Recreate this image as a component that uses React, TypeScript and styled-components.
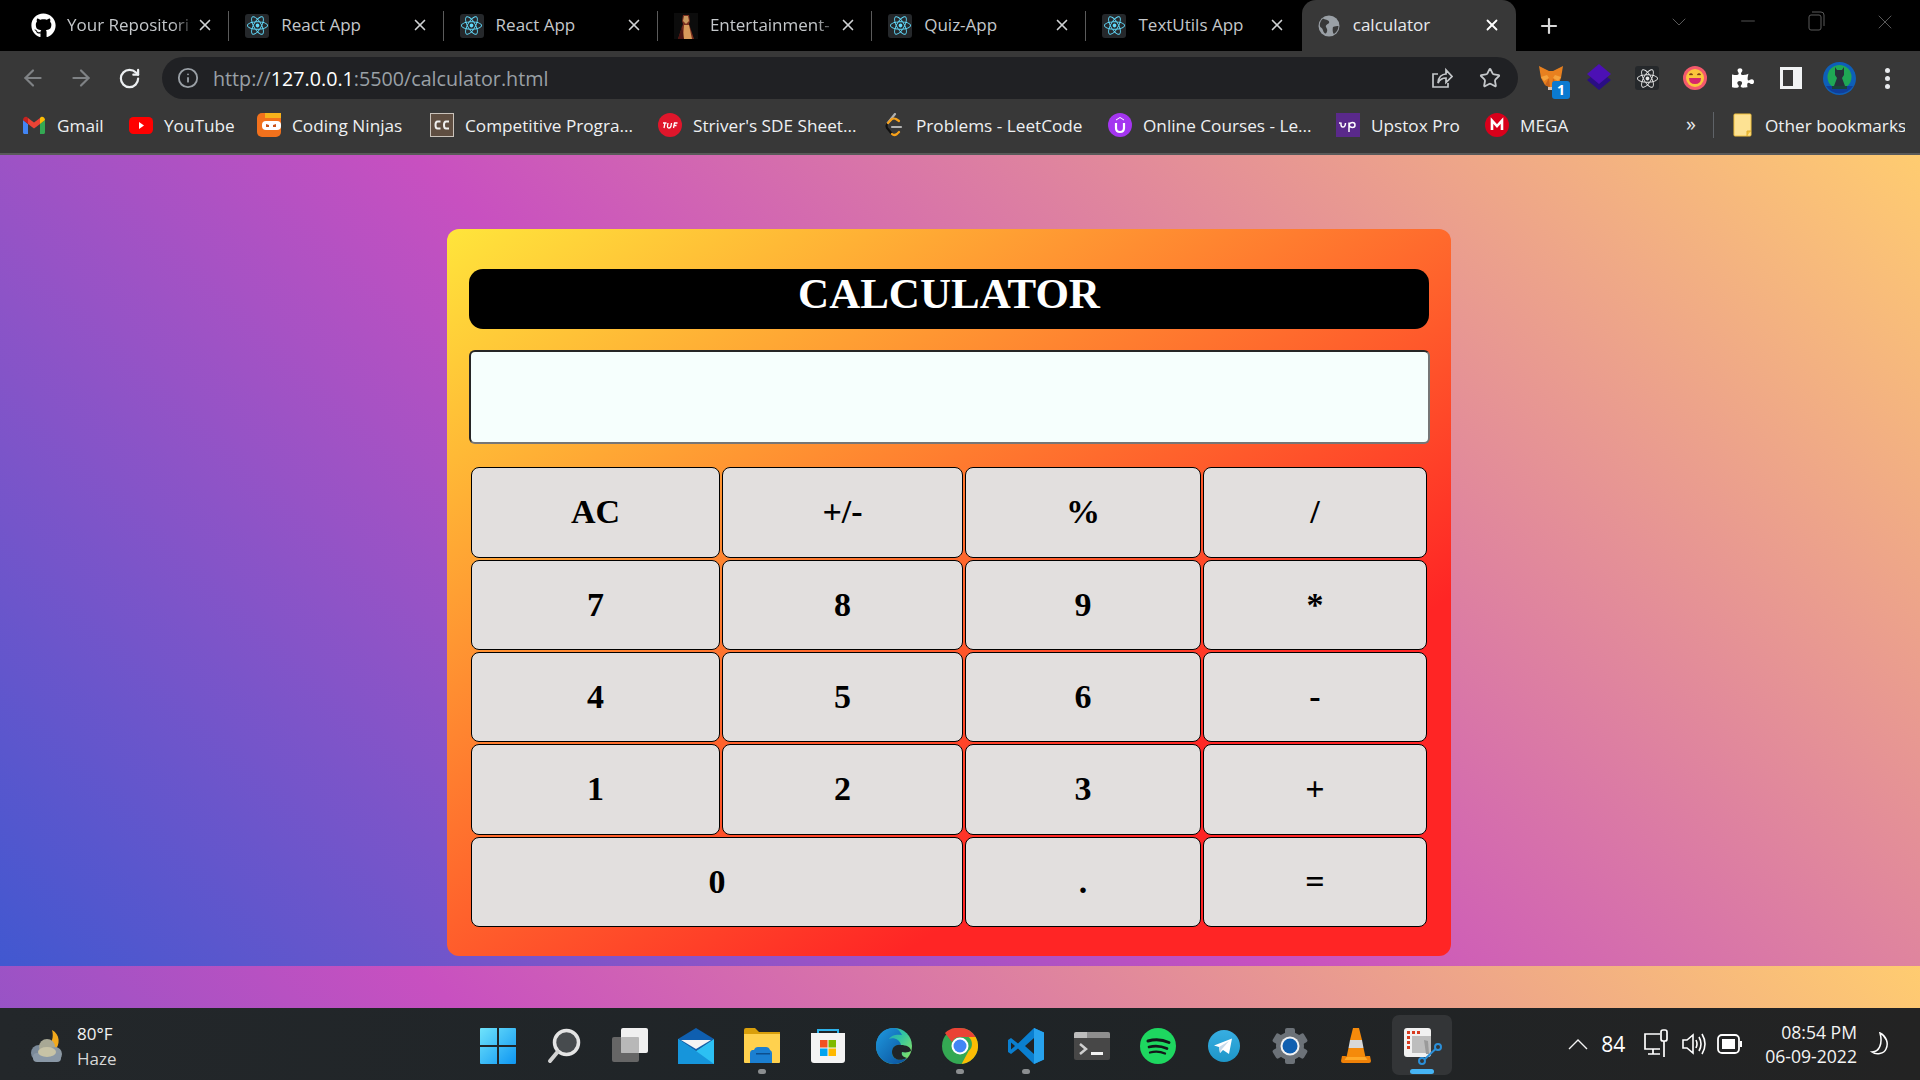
import React from "react";
import styled, { createGlobalStyle } from "styled-components";
import { ArrowLeft, ArrowRight, RotateCw, Info, Star, X, Plus, ChevronDown, Minus } from "lucide-react";
import { FaGithub, FaReact, FaPuzzlePiece } from "react-icons/fa";

const Global = createGlobalStyle`
  html, body { margin: 0; padding: 0; width: 1920px; height: 1080px; overflow: hidden; background: #000; }
  #root { width: 1920px; height: 1080px; }
  * { box-sizing: border-box; }
`;

const UI = `"Open Sans", "Noto Sans", sans-serif`;
const SERIF = `"Liberation Serif", "Times New Roman", serif`;

const Screen = styled.div`
  display: flex; flex-direction: column; width: 1920px; height: 1080px; font-family: ${UI};
`;

/* ---------- browser chrome ---------- */
const TabStrip = styled.div`
  display: flex; height: 51px; background: #000; padding-left: 15px; flex: none; align-items: stretch;
`;
const Tab = styled.div<{ $active?: boolean }>`
  width: ${p => (p.$active ? "214px" : "214.3px")};
  flex: none; display: flex; align-items: center; padding: 0 15px 0 ${p => (p.$active ? "14px" : "15px")}; position: relative;
  margin-left: ${p => (p.$active ? "1px" : "0")};
  background: ${p => (p.$active ? "#383838" : "transparent")};
  border-radius: ${p => (p.$active ? "14px 14px 0 0" : "0")};
  color: ${p => (p.$active ? "#e8eaed" : "#c4c7ca")};
`;
const TabSep = styled.span`
  position: absolute; right: 0; top: 11px; height: 30px; width: 1px; background: #5b5b5b;
`;
const TabFav = styled.span`
  width: 26px; height: 26px; flex: none; display: flex; align-items: center; justify-content: center; margin-right: 11px;
`;
const TabTitle = styled.span<{ $fade?: boolean }>`
  flex: 1; min-width: 0; white-space: nowrap; overflow: hidden; font-size: 17px; line-height: 22px; margin-top: -1px;
  ${p => p.$fade ? "mask-image: linear-gradient(90deg, #000 82%, transparent 100%);" : ""}
`;
const TabClose = styled.span`
  flex: none; width: 18px; height: 18px; display: flex; align-items: center; justify-content: center; color: #d0d2d4; margin-top: -1px;
`;
const NewTab = styled.span`
  width: 30px; margin-left: 18px; display: flex; align-items: center; justify-content: center; color: #d8d8d8;
`;
const WinButtons = styled.div`
  margin-left: auto; display: flex; align-items: flex-start; color: #5a5a5a; padding-right: 23px; padding-top: 10px; gap: 46px;
`;
const ReactBox = styled.span<{ $color?: string }>`
  width: 24px; height: 24px; background: #25282b; border-radius: 3px; display: flex; align-items: center; justify-content: center;
  color: ${p => p.$color || "#61dafb"};
`;

const Toolbar = styled.div`
  height: 54px; background: #383838; display: flex; align-items: center; flex: none; padding-left: 12px;
`;
const NavBtn = styled.span<{ $dim?: boolean }>`
  width: 42px; height: 42px; margin-right: 6px; display: flex; align-items: center; justify-content: center;
  color: ${p => (p.$dim ? "#7f8285" : "#eceff1")};
`;
const AddressBar = styled.div`
  width: 1356px; height: 42px; margin-left: 6px; background: #202124; border-radius: 21px; display: flex; align-items: center; padding: 0 4px 0 15px; flex: none; color: #9aa0a6;
`;
const Url = styled.div`
  margin-left: 14px; font-size: 19.7px; color: #9aa0a6; white-space: nowrap; flex: 1;
  b { font-weight: 400; color: #fff; }
`;
const PillIcon = styled.span`
  width: 48px; display: flex; justify-content: center; color: #c4c7ca; flex: none;
`;
const ExtRow = styled.div`
  display: flex; margin-left: 9px; align-items: center;
`;
const Ext = styled.span`
  width: 48px; height: 42px; display: flex; align-items: center; justify-content: center; position: relative; flex: none; color: #fff;
`;
const Badge = styled.span`
  position: absolute; left: 25px; top: 24px; width: 18px; height: 18px; border-radius: 3px; background: #0b7ad1; color: #fff;
  font-size: 14px; font-weight: 700; line-height: 18px; text-align: center;
`;
const Dots = styled.span`
  display: flex; flex-direction: column; gap: 3px;
  i { width: 5px; height: 5px; border-radius: 50%; background: #e8eaed; display: block; }
`;

const Bookmarks = styled.div`
  height: 48px; background: #383838; display: flex; align-items: center; flex: none; padding: 0 15px 8px 22px; color: #eef0f2; font-size: 17.2px;
`;
const BookmarkItem = styled.span<{ $w: number }>`
  width: ${p => p.$w}px; flex: none; display: flex; align-items: center; white-space: nowrap; overflow: hidden;
`;
const BookmarkIcon = styled.span`
  width: 24px; height: 24px; flex: none; display: flex; align-items: center; justify-content: center; margin-right: 11px;
`;
const More = styled.span`
  margin-left: auto; font-size: 20px; color: #e8eaed; line-height: 1; margin-top: -3px;
`;
const BmSep = styled.span`
  width: 1px; height: 26px; background: #5f6368; margin: 0 16px 0 17px;
`;
const Divider = styled.div`
  height: 2px; background: #5a5a5a; flex: none;
`;

/* ---------- page ---------- */
const Page = styled.main`
  flex: 1; min-height: 0; overflow: hidden; padding: 74px 0 0 447px;
  background-image: linear-gradient(43deg, #4158d0 0%, #c850c0 46%, #ffcc70 100%);
  background-size: 100% 811px;
  background-repeat: repeat;
`;
const Card = styled.section`
  width: 1004px; height: 727px; padding: 40px 22px 27px; border-radius: 12px;
  background-image: linear-gradient(147deg, #ffe53b 0%, #ff2525 74%);
`;
const Title = styled.h1`
  margin: 0 0 21px; height: 60px; background: #000; border-radius: 14px; color: #fff; text-align: center;
  font: 700 43px/50px ${SERIF};
`;
const Display = styled.input`
  display: block; width: 961px; height: 94px; margin: 0 0 21px; padding: 0 8px; background: #f6fffd;
  border: 2px solid; border-color: #262626 #767676 #767676 #262626; border-radius: 6px; outline: none;
`;
const Keys = styled.div`
  display: grid; grid-template-columns: 249px 241px 236px 224px; grid-template-rows: 91px 90px 90px 91px 90px; gap: 2px; padding: 2px;
`;
const Key = styled.button<{ $span?: number }>`
  grid-column: span ${p => p.$span || 1};
  background: #e2dfde; color: #000; border: 1px solid #000; border-radius: 8px; padding: 0 0 1px; margin: 0;
  font: 700 34px/1 ${SERIF};
`;

/* ---------- taskbar ---------- */
const Taskbar = styled.footer`
  height: 72px; flex: none; display: flex; align-items: center; padding-left: 30px;
  background: linear-gradient(90deg, #23272a 0%, #1f2427 50%, #232323 100%);
  color: #fff;
`;
const Weather = styled.div`
  display: flex; align-items: center; width: 435px; flex: none; padding-top: 4px;
`;
const WeatherText = styled.div`
  margin-left: 11px; font-size: 17px; line-height: 25px; color: #f2f2f2;
  span { display: block; }
  span + span { color: #d6d6d6; }
`;
const TaskIcons = styled.div`
  display: flex; flex: none;
`;
const TaskSlot = styled.span<{ $active?: boolean }>`
  width: 66px; height: 72px; padding-top: 3px; display: flex; align-items: center; justify-content: center; position: relative; flex: none;
  ${p => p.$active ? `&::before { content: ""; position: absolute; left: 3px; top: 7px; width: 60px; height: 60px; border-radius: 7px; background: #333537; }` : ""}
  svg { position: relative; }
`;
const RunDot = styled.i<{ $active?: boolean }>`
  position: absolute; left: 50%; bottom: 6px; transform: translateX(-50%); height: 5px; border-radius: 3px;
  width: ${p => (p.$active ? "24px" : "8px")}; background: ${p => (p.$active ? "#46b4f4" : "#8b8e90")};
`;
const Tray = styled.div`
  display: flex; align-items: center; margin-left: auto; padding-right: 29px; color: #fff;
`;
const TrayNum = styled.span`
  font-size: 21px; margin: 0 18px 0 13px;
`;
const TrayIcon = styled.span`
  display: flex; margin-right: 10px;
`;
const Clock = styled.div`
  text-align: right; font-size: 17.6px; line-height: 24px; margin: 0 12px 0 12px; color: #f4f4f4; white-space: nowrap;
  span { display: block; }
`;

/* ---------- drawings ---------- */
const ReactFav = ({ color }: { color?: string }) => (
  <ReactBox $color={color}><FaReact size={21} /></ReactBox>
);
const Portrait = () => (
  <svg width="24" height="26" viewBox="0 0 24 26">
    <rect width="24" height="26" fill="#0c0c0c" />
    <path d="M9 2h6l1 6-1 3 5 15H4L9 11 8 8z" fill="#7a2f1f" />
    <path d="M10 3h4l1 5-3 3-3-3z" fill="#c9985f" />
    <path d="M10 12h5l3 14h-9z" fill="#d79a5b" />
    <path d="M4 26l4-13 2 13z" fill="#4a1512" />
  </svg>
);
const Globe = () => (
  <svg width="22" height="22" viewBox="0 0 22 22">
    <circle cx="11" cy="11" r="10.500" fill="#9aa0a6" />
    <path d="M5 3.500c2 1.500 5 1 6 3s-2 2.500-3 4 2 3 1 6-2 2-3 1-1-4-3-5-1.500-6 2-9zM15 12c2-1 4-1 5.500-1 0 3.500-2 6.500-4.500 8-1.500-1-1.500-5-1-7z" fill="#383838" />
  </svg>
);
const Gmail = () => (
  <svg width="22" height="18" viewBox="0 0 22 18">
    <path d="M0 4v12.500C0 17.300.7 18 1.500 18H5V8z" fill="#4285f4" />
    <path d="M22 4v12.500c0 .8-.7 1.500-1.500 1.500H17V8z" fill="#34a853" />
    <path d="M5 8l6 4.500L17 8V2l-6 4.500L5 2z" fill="#ea4335" />
    <path d="M0 4c0-3 3.400-4.600 5-2v6L0 4z" fill="#c5221f" />
    <path d="M22 4c0-3-3.400-4.600-5-2v6l5-4z" fill="#fbbc04" />
  </svg>
);
const YouTube = () => (
  <svg width="24" height="17" viewBox="0 0 24 17">
    <rect width="24" height="17" rx="4.500" fill="#f00" />
    <path d="M10 5l5 3.500-5 3.500z" fill="#fff" />
  </svg>
);
const Ninjas = () => (
  <svg width="24" height="24" viewBox="0 0 24 24">
    <rect width="24" height="24" rx="5" fill="#f2711c" />
    <path d="M8 0h16v5H8z" fill="#f6b21b" />
    <rect x="5" y="8" width="19" height="9" rx="4" fill="#fff" />
    <path d="M9 11l3 1v2H9zM19 11l-3 1v2h3z" fill="#c9521a" />
  </svg>
);
const CC = () => (
  <svg width="24" height="24" viewBox="0 0 24 24">
    <rect width="24" height="24" fill="#c9c2ba" />
    <rect x="1" y="1" width="22" height="22" fill="#5f4e41" />
    <path d="M10.500 8.500H7.500q-2 0-2 3.500t2 3.500h3M19 8.500h-3q-2 0-2 3.500t2 3.500h3" fill="none" stroke="#f0f0f0" strokeWidth="2" />
  </svg>
);
const Tuf = () => (
  <svg width="24" height="24" viewBox="0 0 24 24">
    <circle cx="12" cy="12" r="12" fill="#e0162b" />
    <path d="M5 10h3.500M7 10l-1 5M10 10l-.6 3.500q0 1.500 1.500 1.500t2-1.500l.6-3.500M15.500 15l1-5h3M16 12.500h2.500" fill="none" stroke="#fff" strokeWidth="1.300" />
  </svg>
);
const LeetCode = () => (
  <svg width="24" height="24" viewBox="0 0 24 24" fill="none" strokeLinecap="round" strokeWidth="2.200">
    <path d="M14 1L6 11" stroke="#b0b0b0" />
    <path d="M6 11q-1 2 0 4l5 6" stroke="#111" />
    <path d="M11 21q2 2 5 0l2-2" stroke="#f7a11a" />
    <path d="M7 10l4-4q2-1 4 0l3 2" stroke="#f7a11a" />
    <path d="M11 14h9" stroke="#b3b3b3" />
  </svg>
);
const Udemy = () => (
  <svg width="24" height="24" viewBox="0 0 24 24">
    <circle cx="12" cy="12" r="12" fill="#a435f0" />
    <path d="M8 10v5q0 4 4 4t4-4v-5" fill="none" stroke="#fff" strokeWidth="2.200" />
    <path d="M12 4l4 2.500v1L12 5l-4 2.500v-1z" fill="#fff" />
  </svg>
);
const Upstox = () => (
  <svg width="24" height="24" viewBox="0 0 24 24">
    <rect width="24" height="24" fill="#5a298b" />
    <path d="M3 10l2 .1q-.3 4 2 4t2.500-4.100M13 9.500V19M13 12q1-2.500 3.500-2.500t2.500 2.500-2.500 2.500T13 12" fill="none" stroke="#fff" strokeWidth="1.500" />
  </svg>
);
const Mega = () => (
  <svg width="24" height="24" viewBox="0 0 24 24">
    <circle cx="12" cy="12" r="12" fill="#d9001b" />
    <path d="M7 17V7.500l5 5.500 5-5.500V17" fill="none" stroke="#fff" strokeWidth="2.600" />
  </svg>
);
const Folder = () => (
  <svg width="19" height="24" viewBox="0 0 19 24">
    <rect x="1" y="1" width="17" height="22" rx="1" fill="#fde293" stroke="#f2c23e" strokeWidth="1" />
    <path d="M14 23v-5h4" fill="#f2c23e" stroke="#e0ae2c" />
  </svg>
);
const Share = () => (
  <svg width="22" height="22" viewBox="0 0 22 22" fill="none" stroke="#c4c7ca" strokeWidth="1.700">
    <path d="M7 7H2v13h15v-4" />
    <path d="M7 16c0-6 4-9 8-9V3l6 6.500-6 6V11c-3 0-6 1-8 5z" />
  </svg>
);
const Fox = () => (
  <svg width="26" height="26" viewBox="0 0 26 26">
    <path d="M1 1l10 5h4l10-5-2 12-3 7-5 2H11l-4-2-4-7z" fill="#e8801f" />
    <path d="M7 20l4-7 1 9zM19 20l-4-7-1 9z" fill="#c9631a" />
    <path d="M3 12l6-2 2 3-5 3z" fill="#f6a23c" />
    <path d="M23 12l-6-2-2 3 5 3z" fill="#f6a23c" />
    <path d="M10 22h6v3h-6z" fill="#d7c1b3" />
  </svg>
);
const Stack = () => (
  <svg width="26" height="28" viewBox="0 0 26 28">
    <path d="M13 7l12 9-12 10L1 16z" fill="#2a0e84" />
    <path d="M13 0l12 10-12 10L1 10z" fill="#4c10b5" />
  </svg>
);
const Emoji = () => (
  <svg width="24" height="24" viewBox="0 0 24 24">
    <circle cx="12" cy="12" r="12" fill="#f4596c" />
    <circle cx="12" cy="12" r="9" fill="#fbc63c" />
    <path d="M6.500 9q1.500-2 3 0M14.500 9q1.500-2 3 0" fill="none" stroke="#7a3b12" strokeWidth="1.300" />
    <path d="M6 12h12q0 6-6 6t-6-6z" fill="#d6266c" />
  </svg>
);
const SidePanel = () => (
  <svg width="22" height="22" viewBox="0 0 22 22">
    <rect width="22" height="22" fill="#f1f3f4" />
    <rect x="3" y="3" width="10" height="16" fill="#383838" />
  </svg>
);
const Avatar = () => (
  <svg width="33" height="33" viewBox="0 0 33 33">
    <circle cx="16.500" cy="16.500" r="16.500" fill="#0e5fb8" />
    <circle cx="16.500" cy="15" r="12" fill="#1fa855" />
    <path d="M3 24h27a16 16 0 0 1-27 0z" fill="#103e9a" />
    <path d="M12 5l2 3h5l2-3v8l-2 3 3 8H11l3-8-2-3z" fill="#27313a" />
    <path d="M9 24h15v3H9z" fill="#19433a" />
  </svg>
);
const MoonCloud = () => (
  <svg width="36" height="34" viewBox="0 0 36 34">
    <path d="M22 1c8 4 9 15 2 21l-8-4c6-3 8-10 6-17z" fill="#f2a91c" />
    <circle cx="9" cy="24" r="8" fill="#7b8a99" />
    <circle cx="17" cy="18" r="8" fill="#a8a895" />
    <circle cx="25" cy="25" r="7" fill="#8d99a3" />
    <rect x="3" y="24" width="28" height="9" rx="4" fill="#8a98a6" />
    <ellipse cx="17" cy="23" rx="9" ry="5" fill="#c7c3a6" />
  </svg>
);
const WinLogo = () => (
  <svg width="36" height="36" viewBox="0 0 36 36">
    <defs><linearGradient id="w" x1="0" y1="0" x2="1" y2="1"><stop offset="0" stopColor="#6fe3fb" /><stop offset="1" stopColor="#0e96f2" /></linearGradient></defs>
    <path d="M1 0h16v17H0V1a1 1 0 0 1 1-1zM19 0h16a1 1 0 0 1 1 1v16H19zM0 19h17v17H1a1 1 0 0 1-1-1zM19 19h17v16a1 1 0 0 1-1 1H19z" fill="url(#w)" />
  </svg>
);
const SearchIcon = () => (
  <svg width="36" height="36" viewBox="0 0 36 36" fill="none">
    <circle cx="20.500" cy="14.500" r="12" fill="#474b4e" stroke="#e4e4e4" strokeWidth="3.500" />
    <path d="M11.500 24L4 33" stroke="#d2d2d2" strokeWidth="4" strokeLinecap="round" />
  </svg>
);
const TaskView = () => (
  <svg width="36" height="36" viewBox="0 0 36 36">
    <rect x="0" y="9" width="27" height="25" rx="2" fill="#666" />
    <rect x="9" y="0" width="27" height="25" rx="2" fill="#f0f0f0" />
    <rect x="9" y="9" width="18" height="16" rx="1" fill="#b8b8b8" />
  </svg>
);
const Mail = () => (
  <svg width="36" height="36" viewBox="0 0 36 36">
    <path d="M0 11L18 0l18 11-18 12z" fill="#0f5fb0" />
    <path d="M3 12h30l-15 9z" fill="#f3f3f3" />
    <path d="M0 11l18 12 18-12v25H0z" fill="#2cc0f3" />
    <path d="M0 36V11l18 12 18 13z" fill="#1695db" />
  </svg>
);
const Explorer = () => (
  <svg width="36" height="36" viewBox="0 0 36 36">
    <path d="M0 2a2 2 0 0 1 2-2h9l4 4h21v4H0z" fill="#d99f0b" />
    <path d="M0 6h36v28a1 1 0 0 1-1 1H1a1 1 0 0 1-1-1z" fill="#ffd14e" />
    <path d="M6 25q0-2 2-3h2q1-3 4-3h8q3 0 4 3 2 1 2 3v10H6z" fill="#1b7fd1" />
    <rect x="12" y="25" width="14" height="1.500" fill="#0d4f8d" />
  </svg>
);
const Store = () => (
  <svg width="36" height="36" viewBox="0 0 36 36">
    <path d="M8 6V2h20v4" fill="none" stroke="#2eb2ea" strokeWidth="2" />
    <path d="M1 5h34v27a3 3 0 0 1-3 3H4a3 3 0 0 1-3-3z" fill="#f4f4f4" />
    <rect x="10" y="12" width="7.500" height="7.500" fill="#f25022" />
    <rect x="18.500" y="12" width="7.500" height="7.500" fill="#7fba00" />
    <rect x="10" y="20.500" width="7.500" height="7.500" fill="#00a4ef" />
    <rect x="18.500" y="20.500" width="7.500" height="7.500" fill="#ffb900" />
  </svg>
);
const Edge = () => (
  <svg width="36" height="36" viewBox="0 0 36 36">
    <defs>
      <linearGradient id="e1" x1="0" y1="0" x2="1" y2=".7"><stop offset="0" stopColor="#1a8fd0" /><stop offset=".6" stopColor="#33c5a0" /><stop offset="1" stopColor="#7fe06a" /></linearGradient>
      <linearGradient id="e2" x1="0" y1="0" x2="1" y2="1"><stop offset="0" stopColor="#1f9ae0" /><stop offset="1" stopColor="#0a4f9a" /></linearGradient>
    </defs>
    <circle cx="18" cy="18" r="18" fill="url(#e1)" />
    <path d="M18 0C6 0 0 9 0 18c0 10 8 18 18 18 5 0 10-2 13-6-7 3-15 2-15-6 0-4 4-8 9-7-1-5-7-8-12-6 2-4 8-5 13-4C24 3 21 0 18 0z" fill="url(#e2)" />
    <path d="M16 24c0-5 4-8 9-7 5 0 10 2 10 6-2 1-5 2-9 1-1 3 1 5 5 6-8 4-15 1-15-6z" fill="#202427" />
  </svg>
);
const Chrome = () => (
  <svg width="36" height="36" viewBox="0 0 36 36">
    <circle cx="18" cy="18" r="18" fill="#34a853" />
    <path d="M18 0a18 18 0 0 1 15.600 9H18a9 9 0 0 0-8 5L3 5A18 18 0 0 1 18 0z" fill="#ea4335" />
    <path d="M33.600 9a18 18 0 0 1-14 27l7-13a9 9 0 0 0 0-14z" fill="#fbbc04" />
    <circle cx="18" cy="18" r="8.500" fill="#fff" />
    <circle cx="18" cy="18" r="6.500" fill="#4285f4" />
  </svg>
);
const VSCode = () => (
  <svg width="36" height="36" viewBox="0 0 36 36">
    <path d="M26 0l10 4.500v27L26 36 10 20.500 3 26l-3-2V12l3-2 7 5.500z" fill="#0a7fd0" />
    <path d="M26 0l10 4.500v27L26 36z" fill="#27a2ed" />
    <path d="M26 10l-9 8 9 8z" fill="#202326" />
    <path d="M3 14.500L7 18l-4 3.500z" fill="#202326" />
  </svg>
);
const Terminal = () => (
  <svg width="36" height="28" viewBox="0 0 36 28">
    <rect width="36" height="28" rx="2" fill="#474747" />
    <path d="M0 2a2 2 0 0 1 2-2h11v6H0z" fill="#bdbdbd" />
    <path d="M13 0h21a2 2 0 0 1 2 2v4H13z" fill="#8e8e8e" />
    <path d="M6 12l6 5-6 5" fill="none" stroke="#cfcfcf" strokeWidth="2.500" />
    <rect x="17" y="20" width="12" height="3" fill="#f2f2f2" />
  </svg>
);
const Spotify = () => (
  <svg width="36" height="36" viewBox="0 0 36 36" fill="none" stroke="#13161a" strokeLinecap="round">
    <circle cx="18" cy="18" r="18" fill="#1ed760" stroke="none" />
    <path d="M8 13q11-3 21 1.500" strokeWidth="3" />
    <path d="M9 19q9-2.500 18 1.500" strokeWidth="2.700" />
    <path d="M10 24.500q8-2 15 1" strokeWidth="2.300" />
  </svg>
);
const Telegram = () => (
  <svg width="32" height="32" viewBox="0 0 32 32">
    <defs><linearGradient id="t" x1="0" y1="0" x2="0" y2="1"><stop offset="0" stopColor="#37aee2" /><stop offset="1" stopColor="#1e96c8" /></linearGradient></defs>
    <circle cx="16" cy="16" r="16" fill="url(#t)" />
    <path d="M6 15.500L24 8.500 21 24l-6-4-3 3-1-6z" fill="#fff" />
    <path d="M11 17l10-6-7 8-2 4z" fill="#c8daea" />
  </svg>
);
const Gear = () => (
  <svg width="36" height="36" viewBox="0 0 36 36">
    <g fill="#6c7278">
      <circle cx="18" cy="18" r="14" />
      {[0, 60, 120, 180, 240, 300].map(a => (
        <rect key={a} x="13" y="0" width="10" height="9" rx="2" transform={`rotate(${a} 18 18)`} />
      ))}
    </g>
    <circle cx="18" cy="18" r="9.500" fill="#f2f2f2" />
    <circle cx="18" cy="18" r="7.500" fill="#0f5fb0" />
  </svg>
);
const Vlc = () => (
  <svg width="30" height="36" viewBox="0 0 30 36">
    <path d="M12 0h6l3 12H9z" fill="#f58a0b" />
    <path d="M9 12h12l1.500 8h-15z" fill="#d8d8d8" />
    <path d="M7.500 20h15l2 9h-19z" fill="#f58a0b" />
    <path d="M1 28h4l-1 0 10 3 12-3h3l1 5q0 2-2 2H2q-2 0-2-2z" fill="#ef8107" />
    <path d="M5.500 29h19l2 3H3.500z" fill="#ffa928" />
  </svg>
);
const Snip = () => (
  <svg width="36" height="36" viewBox="0 0 36 36" style={{ overflow: "visible" }}>
    <rect x="0" y="0" width="27" height="29" rx="3" fill="#f1f1f1" />
    <g fill="#d83b1f">
      <rect x="3" y="3" width="3" height="3" /><rect x="8" y="3" width="3" height="3" /><rect x="13" y="3" width="3" height="3" />
      <rect x="3" y="8" width="3" height="3" /><rect x="3" y="13" width="3" height="3" /><rect x="3" y="18" width="3" height="3" />
    </g>
    <rect x="8" y="8" width="19" height="17" fill="#bdbdbd" />
    <path d="M20 12l4 1 1 13-3 0z" fill="#9a9a9a" />
    <g fill="none" stroke="#2b8fd8" strokeWidth="2">
      <circle cx="34" cy="19" r="3" /><circle cx="18" cy="33" r="3" />
      <path d="M31.500 21L21 31" />
    </g>
  </svg>
);
const TrayChevron = () => (
  <svg width="20" height="12" viewBox="0 0 20 12" fill="none" stroke="#f4f4f4" strokeWidth="1.400"><path d="M1 11l9-9 9 9" /></svg>
);
const Network = () => (
  <svg width="28" height="30" viewBox="0 0 28 30" fill="none" stroke="#fff" strokeWidth="1.700">
    <path d="M17 5H2v15h15M5 25h12M10 20v5" />
    <rect x="18" y="1" width="6" height="11" rx="2" />
    <path d="M21 12v16" />
  </svg>
);
const Volume = () => (
  <svg width="26" height="26" viewBox="0 0 26 26" fill="none" stroke="#fff" strokeWidth="1.600">
    <path d="M2 9h4l6-5v18l-6-5H2z" />
    <path d="M15 9q2 4 0 8M18 6q4 7 0 14M21 3q6 10 0 20" />
  </svg>
);
const Battery = () => (
  <svg width="26" height="22" viewBox="0 0 26 22">
    <rect x="1" y="2" width="21" height="18" rx="4" fill="none" stroke="#fff" strokeWidth="1.800" />
    <rect x="5" y="6" width="13" height="10" fill="#fff" />
    <rect x="23" y="8" width="2" height="6" fill="#fff" />
  </svg>
);
const Moon = () => (
  <svg width="22" height="24" viewBox="0 0 22 24" fill="none" stroke="#fff" strokeWidth="1.500">
    <path d="M11 1c6 3 9 10 6 16-2 5-10 6-14 3 7 0 11-8 8-19z" />
  </svg>
);

const tabs = [
  { fav: <FaGithub size={25} color="#fff" />, title: "Your Repositori", fade: true },
  { fav: <ReactFav />, title: "React App" },
  { fav: <ReactFav />, title: "React App" },
  { fav: <Portrait />, title: "Entertainment-", fade: true },
  { fav: <ReactFav />, title: "Quiz-App" },
  { fav: <ReactFav />, title: "TextUtils App" },
];

const bookmarks = [
  { icon: <Gmail />, label: "Gmail", w: 107 },
  { icon: <YouTube />, label: "YouTube", w: 128 },
  { icon: <Ninjas />, label: "Coding Ninjas", w: 173 },
  { icon: <CC />, label: "Competitive Progra...", w: 228 },
  { icon: <Tuf />, label: "Striver's SDE Sheet...", w: 223 },
  { icon: <LeetCode />, label: "Problems - LeetCode", w: 227 },
  { icon: <Udemy />, label: "Online Courses - Le...", w: 228 },
  { icon: <Upstox />, label: "Upstox Pro", w: 149 },
  { icon: <Mega />, label: "MEGA", w: 90 },
];

const keys: { label: string; span?: number }[] = [
  { label: "AC" }, { label: "+/-" }, { label: "%" }, { label: "/" },
  { label: "7" }, { label: "8" }, { label: "9" }, { label: "*" },
  { label: "4" }, { label: "5" }, { label: "6" }, { label: "-" },
  { label: "1" }, { label: "2" }, { label: "3" }, { label: "+" },
  { label: "0", span: 2 }, { label: "." }, { label: "=" },
];

const apps: { icon: React.ReactNode; run?: boolean; active?: boolean }[] = [
  { icon: <WinLogo /> }, { icon: <SearchIcon /> }, { icon: <TaskView /> }, { icon: <Mail /> },
  { icon: <Explorer />, run: true }, { icon: <Store /> }, { icon: <Edge /> }, { icon: <Chrome />, run: true },
  { icon: <VSCode />, run: true }, { icon: <Terminal /> }, { icon: <Spotify /> }, { icon: <Telegram /> },
  { icon: <Gear /> }, { icon: <Vlc /> }, { icon: <Snip />, active: true },
];

export default function App() {
  return (
    <Screen>
      <Global />
      <TabStrip>
        {tabs.map((t, i) => (
          <Tab key={i}>
            <TabFav>{t.fav}</TabFav>
            <TabTitle $fade={t.fade}>{t.title}</TabTitle>
            <TabClose><X size={18} strokeWidth={2.2} /></TabClose>
            {i < tabs.length - 1 && <TabSep />}
          </Tab>
        ))}
        <Tab $active>
          <TabFav><Globe /></TabFav>
          <TabTitle>calculator</TabTitle>
          <TabClose><X size={18} strokeWidth={2.4} color="#fff" /></TabClose>
        </Tab>
        <NewTab><Plus size={24} strokeWidth={2.2} /></NewTab>
        <WinButtons>
          <ChevronDown size={24} strokeWidth={1} />
          <Minus size={22} strokeWidth={1} />
          <svg width="22" height="22" viewBox="0 0 22 22" fill="none" stroke="#5a5a5a"><rect x="4" y="5" width="12" height="15" rx="2" /><path d="M7 2h9a3 3 0 0 1 3 3v11" /></svg>
          <X size={24} strokeWidth={1} />
        </WinButtons>
      </TabStrip>

      <Toolbar>
        <NavBtn $dim><ArrowLeft size={26} strokeWidth={2} /></NavBtn>
        <NavBtn $dim><ArrowRight size={26} strokeWidth={2} /></NavBtn>
        <NavBtn><RotateCw size={23} strokeWidth={2.3} /></NavBtn>
        <AddressBar>
          <Info size={22} strokeWidth={2} />
          <Url>http://<b>127.0.0.1</b>:5500/calculator.html</Url>
          <PillIcon><Share /></PillIcon>
          <PillIcon><Star size={22} strokeWidth={2} /></PillIcon>
        </AddressBar>
        <ExtRow>
          <Ext><Fox /><Badge>1</Badge></Ext>
          <Ext><Stack /></Ext>
          <Ext><ReactFav color="#e8e8e8" /></Ext>
          <Ext><Emoji /></Ext>
          <Ext><FaPuzzlePiece size={22} color="#fff" /></Ext>
          <Ext><SidePanel /></Ext>
          <Ext><Avatar /></Ext>
          <Ext><Dots><i /><i /><i /></Dots></Ext>
        </ExtRow>
      </Toolbar>

      <Bookmarks>
        {bookmarks.map(b => (
          <BookmarkItem key={b.label} $w={b.w}>
            <BookmarkIcon>{b.icon}</BookmarkIcon>
            {b.label}
          </BookmarkItem>
        ))}
        <More>»</More>
        <BmSep />
        <BookmarkItem $w={175}>
          <BookmarkIcon>
            <Folder />
          </BookmarkIcon>
          Other bookmarks
        </BookmarkItem>
      </Bookmarks>
      <Divider />

      <Page>
        <Card>
          <Title>CALCULATOR</Title>
          <Display readOnly aria-label="display" />
          <Keys>
            {keys.map(k => (
              <Key key={k.label} $span={k.span}>{k.label}</Key>
            ))}
          </Keys>
        </Card>
      </Page>

      <Taskbar>
        <Weather>
          <MoonCloud />
          <WeatherText><span>80°F</span><span>Haze</span></WeatherText>
        </Weather>
        <TaskIcons>
          {apps.map((a, i) => (
            <TaskSlot key={i} $active={a.active}>
              {a.icon}
              {a.run && <RunDot />}
              {a.active && <RunDot $active />}
            </TaskSlot>
          ))}
        </TaskIcons>
        <Tray>
          <TrayChevron />
          <TrayNum>84</TrayNum>
          <TrayIcon><Network /></TrayIcon>
          <TrayIcon><Volume /></TrayIcon>
          <TrayIcon><Battery /></TrayIcon>
          <Clock><span>08:54 PM</span><span>06-09-2022</span></Clock>
          <Moon />
        </Tray>
      </Taskbar>
    </Screen>
  );
}
